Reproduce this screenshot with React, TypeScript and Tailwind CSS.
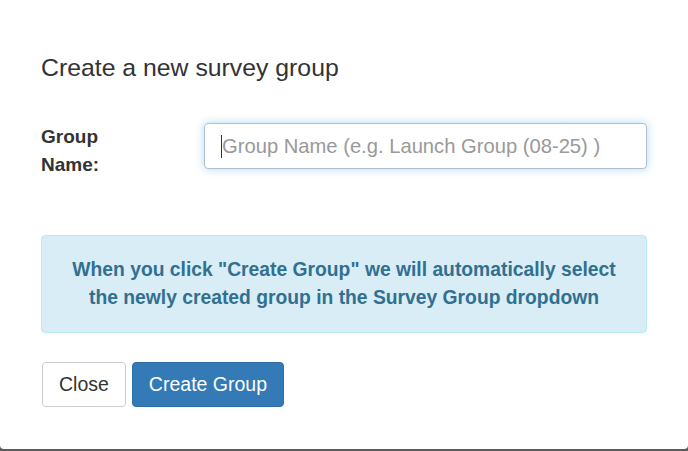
export default function App() {
	return (
		<div
			className="h-[451px] w-full bg-[#5c5c5c] flex flex-col"
			style={{ fontFamily: '"Liberation Sans", Arial, sans-serif' }}
		>
			<div className="flex-1 bg-white rounded-b-[4px] px-[41px] pt-[54px] text-[#333]">
				<h4 className="text-[24.8px] leading-[27px] font-normal">
					Create a new survey group
				</h4>

				<div className="flex mt-[42px]">
					<label className="w-[100px] text-[19px] leading-[28px] font-bold">
						Group Name:
					</label>
					<div className="relative ml-[63px] flex-1">
						<input
							readOnly
							placeholder="Group Name (e.g. Launch Group (08-25) )"
							className="w-full h-[46px] rounded-[4px] border border-[#b4c0cc] bg-white pl-[17px] text-[20.2px] placeholder:text-[#999] outline-none shadow-[0_0_9px_rgba(102,175,233,0.5)]"
						/>
						<span className="absolute left-[17px] top-[12px] h-[23px] w-px bg-[#333]" />
					</div>
				</div>

				<div className="mt-[56px] rounded-[4px] border border-[#bce8f1] bg-[#d9edf7] py-[20px] text-center text-[19.3px] leading-[28px] font-bold text-[#31708f]">
					When you click "Create Group" we will automatically select
					<br />
					the newly created group in the Survey Group dropdown
				</div>

				<div className="mt-[29px] ml-px flex gap-[6px]">
					<button className="h-[45px] rounded-[4px] border border-[#ccc] bg-white px-[16px] text-[19.5px] text-[#333]">
						Close
					</button>
					<button className="h-[45px] rounded-[4px] border border-[#2e6da4] bg-[#337ab7] px-[16px] text-[19.5px] text-white">
						Create Group
					</button>
				</div>
			</div>
			<div className="h-[2px]" />
		</div>
	);
}
